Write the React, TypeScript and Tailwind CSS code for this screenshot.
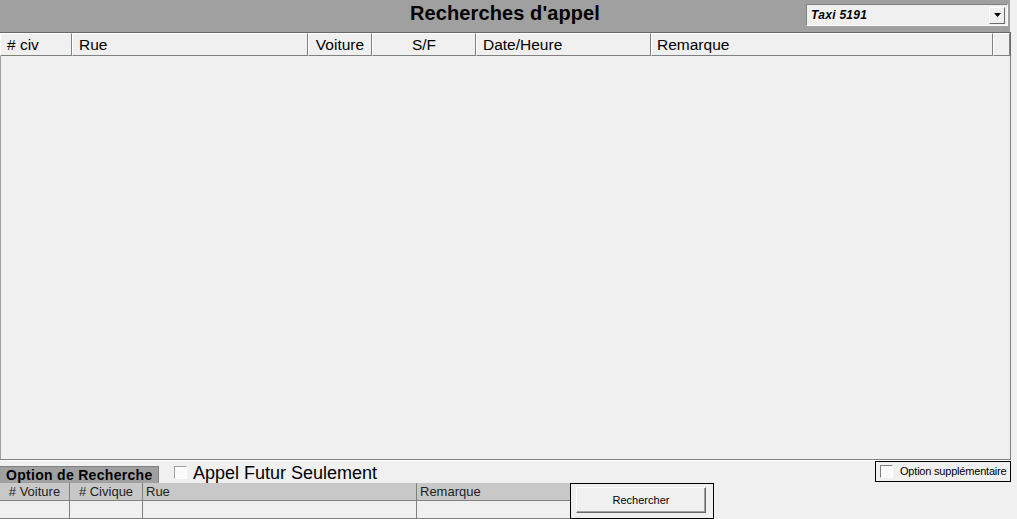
import React from "react";

const headerCols = [
  { label: "# civ", w: "w-[72px]", align: "justify-start pl-[6px]" },
  { label: "Rue", w: "w-[236px]", align: "justify-start pl-[6px]" },
  { label: "Voiture", w: "w-[64px]", align: "justify-center" },
  { label: "S/F", w: "w-[104px]", align: "justify-center" },
  { label: "Date/Heure", w: "w-[175px]", align: "justify-start pl-[6px]" },
  { label: "Remarque", w: "w-[342px]", align: "justify-start pl-[5px]" },
  { label: "", w: "w-[17px]", align: "justify-start" },
];

const searchCols = [
  { label: "# Voiture", w: "w-[70px]", align: "justify-center" },
  { label: "# Civique", w: "w-[73px]", align: "justify-center" },
  { label: "Rue", w: "w-[274px]", align: "justify-start pl-[3px]" },
  { label: "Remarque", w: "w-[153px]", align: "justify-start pl-[3px]" },
];

export default function App() {
  return (
    <div className="w-[1017px] h-[519px] overflow-hidden bg-[#f0f0f0] flex flex-col font-['Liberation_Sans',Arial,sans-serif] text-black">
      {/* Main panel */}
      <div className="w-[1011px] h-[461px] flex flex-col">
        {/* Title bar */}
        <div className="h-[32px] w-[1010px] bg-[#a0a0a0] grid grid-cols-[1fr_auto_1fr] items-start">
          <div />
          <div className="text-[20px] font-bold leading-[26px] tracking-[0.1px]">Recherches d'appel</div>
          <div className="flex justify-end pt-[4px] pr-[2px]">
            <div className="w-[202px] h-[22px] bg-[#f0f0f0] border-t border-l border-[#808080] border-b border-r border-b-white border-r-white flex items-center">
              <span className="flex-1 pl-[4px] text-[12px] font-bold italic leading-none tracking-[0.3px]">Taxi 5191</span>
              <div className="w-[16px] h-[17px] mr-[2px] bg-[#f0f0f0] border-t border-l border-white border-b border-r border-b-[#696969] border-r-[#696969] flex items-center justify-center">
                <svg width="7" height="4" viewBox="0 0 7 4">
                  <path d="M0 0H7L3.5 4Z" fill="#000" />
                </svg>
              </div>
            </div>
          </div>
        </div>
        {/* Header row */}
        <div className="h-[24px] flex border-t border-[#696969] border-r border-r-[#696969]">
          {headerCols.map((c, i) => (
            <div
              key={i}
              className={`${c.w} h-[23px] flex items-center ${c.align} border-t border-l border-white border-r border-b border-r-[#808080] border-b-[#808080] text-[15.5px] leading-none`}
            >
              {c.label}
            </div>
          ))}
        </div>
        {/* Body */}
        <div className="flex-1 bg-[#f0f0f0] border-r border-[#808080] border-b border-b-[#808080] border-l border-l-[#a0a0a0]" />
        <div className="h-[1px] bg-white" />
      </div>

      {/* Bottom section */}
      <div className="flex-1 flex flex-col">
        <div className="h-[22px] flex items-start justify-between">
          <div className="flex items-end h-[22px]">
            <div className="w-[159px] h-[17px] bg-[#a0a0a0] border-t border-r border-[#808080] flex items-center pl-[6px] text-[14px] font-bold leading-none tracking-[0.3px]">
              Option de Recherche
            </div>
            <div className="self-start mt-[5px] ml-[15px] w-[13px] h-[13px] bg-[#fafafa] border-t border-l border-[#a0a0a0] border-b border-r border-b-white border-r-white" />
            <span className="self-start mt-[3px] ml-[6px] text-[18px] leading-[18px]">Appel Futur Seulement</span>
          </div>
          <div className="mr-[6px] w-[136px] h-[21px] border border-black flex items-center">
            <div className="ml-[4px] w-[13px] h-[13px] bg-[#fafafa] border-t border-l border-[#808080] border-b border-r border-b-white border-r-white" />
            <span className="ml-[7px] text-[11px] tracking-[-0.2px] leading-none">Option supplémentaire</span>
          </div>
        </div>
        <div className="flex h-[36px]">
          <div className="w-[570px] flex flex-col">
            <div className="flex h-[18px] bg-[#c8c8c8] border-b border-[#808080]">
              {searchCols.map((c, i) => (
                <div
                  key={i}
                  className={`${c.w} h-[17px] flex items-center ${c.align} text-[13px] leading-none text-[#222] ${i < 3 ? "border-r border-[#808080]" : ""}`}
                >
                  {c.label}
                </div>
              ))}
            </div>
            <div className="flex h-[18px] border-b border-[#808080]">
              {searchCols.map((c, i) => (
                <div key={i} className={`${c.w} h-[17px] ${i < 3 ? "border-r border-[#808080]" : ""}`} />
              ))}
            </div>
          </div>
          <div className="w-[144px] h-[36px] border border-black flex items-start pl-[5px] pt-[3px]">
            <button className="w-[130px] h-[26px] bg-[#f0f0f0] border-t border-l border-white border-b border-r border-b-[#696969] border-r-[#696969] shadow-[inset_-1px_-1px_0_#a0a0a0] text-[11px] leading-none flex items-center justify-center">
              Rechercher
            </button>
          </div>
        </div>
      </div>
    </div>
  );
}
